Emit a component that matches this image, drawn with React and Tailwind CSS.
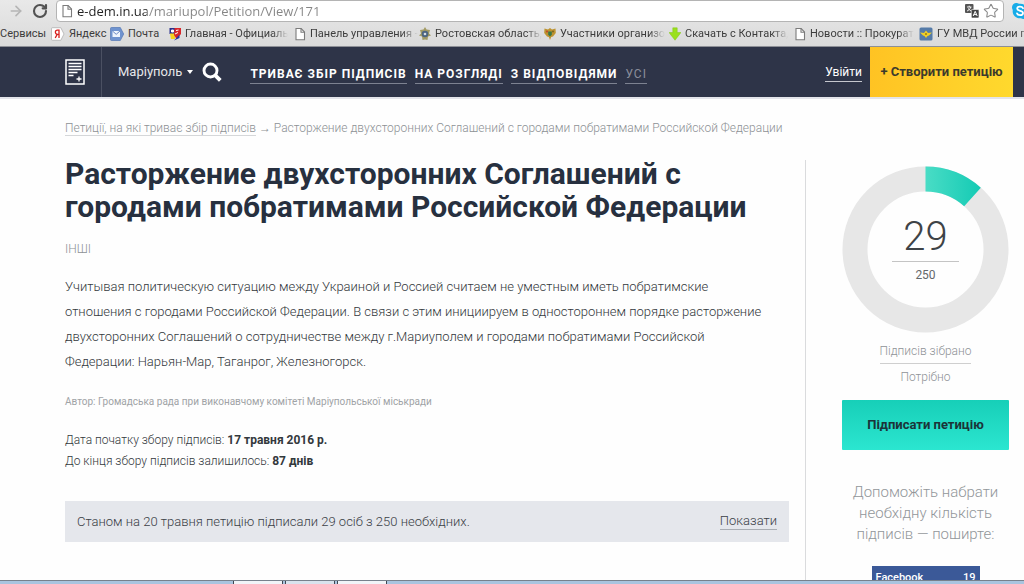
import React from "react";
import { ArrowRight, Star, RotateCw } from "lucide-react";

function PageIcon() {
  return (
    <svg viewBox="0 0 12 14" className="h-3.5 w-3 shrink-0" fill="#fff" stroke="#7b7b7b" strokeWidth="1.1">
      <path d="M2 1.5h5.2L10.5 5v7.8H2z" />
      <path d="M7 1.5V5.2h3.5" fill="none" />
    </svg>
  );
}

function YandexIcon() {
  return (
    <svg viewBox="0 0 14 14" className="h-3.5 w-3.5 shrink-0">
      <path d="M1.5 .7h8.300L13 7l-3.200 6.300H1.500a1 1 0 0 1-1-1V1.700a1 1 0 0 1 1-1z" fill="#fff" stroke="#b0b0b0" strokeWidth=".8" />
      <path d="M8 11V3.200H6.400a2 2.100 0 0 0 0 4.200H8M6.200 7.400 4.200 11" fill="none" stroke="#d8201f" strokeWidth="1.300" />
    </svg>
  );
}

function MailIcon() {
  return (
    <svg viewBox="0 0 14 14" className="h-3.5 w-3.5 shrink-0">
      <path d="M1.500 .5h8.800L13.700 7l-3.400 6.500H1.500a1 1 0 0 1-1-1v-11a1 1 0 0 1 1-1z" fill="#6f93cf" stroke="#5577b4" strokeWidth=".7" />
      <path d="M2.500 4h7.500v6H2.500z" fill="#eef4fd" />
      <path d="m2.500 4 3.700 3.300L10 4" fill="none" stroke="#5a7dbb" strokeWidth=".9" />
    </svg>
  );
}

function ShieldFlagIcon() {
  return (
    <svg viewBox="0 0 12 14" className="h-3.5 w-3 shrink-0">
      <path d="M.5 1H11v6H.5z" fill="#2a2f8c" />
      <path d="M1 6.500h5V12H2z" fill="#f5d21f" />
      <path d="M5.500 1H12v6L7.500 12 5 8z" fill="#d8272a" />
      <path d="M2.500 3h2v2h-2zM7 3.500l2.500-.5M6 7l3-1.500" fill="#fff" stroke="#fff" strokeWidth="1" />
      <path d="M5 13.500 10.500 7.500V11z" fill="#2638a0" />
    </svg>
  );
}

function BadgeIcon() {
  return (
    <svg viewBox="0 0 12 14" className="h-3.5 w-3 shrink-0">
      <path d="M6 0l1.500 2.500L11 3 10 6.500l2 2-3 1-.5 3.500L6 12.500 3.500 13 3 9.500l-3-1 2-2L1 3l3.500-.5z" fill="#a29a62" />
      <circle cx="6" cy="7" r="3.300" fill="#4d6580" />
      <circle cx="6" cy="7" r="1.300" fill="#d5dbe2" />
    </svg>
  );
}

function EagleIcon() {
  return (
    <svg viewBox="0 0 12 14" className="h-3.5 w-3 shrink-0">
      <path d="M6 1 8 2.500 11.500 1.500 11.800 6 9 9.500 7.200 10 6 13 4.800 10 3 9.500.2 6 .5 1.500 4 2.500z" fill="#bd9330" />
      <path d="M4.200 4.500h3.600v3.300L6 9.500 4.200 7.800z" fill="#377649" />
      <circle cx="3" cy="4.500" r="1" fill="#c3442d" />
      <circle cx="9" cy="4.500" r="1" fill="#7b6520" />
    </svg>
  );
}

function DownloadIcon() {
  return (
    <svg viewBox="0 0 12 14" className="h-3.5 w-3 shrink-0">
      <path d="M3.800 .8h4.400v4.700H12L6 13.200 0 5.500h3.800z" fill="#9be01c" stroke="#83c615" strokeWidth=".5" />
    </svg>
  );
}

function PoliceIcon() {
  return (
    <svg viewBox="0 0 14 14" className="h-3.5 w-3.5 shrink-0">
      <rect x=".5" y=".5" width="13" height="13" rx="1.500" fill="#557ba8" />
      <path d="M1 5.500l4 .5 2-2.500 2 2.500 4-.5-3 3-1.500.5L7 11 5.500 9 4 8.500z" fill="#f0cf25" />
      <circle cx="7" cy="7" r="1" fill="#9a7c12" />
    </svg>
  );
}

const shortBookmarks = [
  { label: "Яндекс", Icon: YandexIcon },
  { label: "Почта", Icon: MailIcon },
];

const longBookmarks = [
  { label: "Главная - Официаль", Icon: ShieldFlagIcon },
  { label: "Панель управления -", Icon: PageIcon },
  { label: "Ростовская область,", Icon: BadgeIcon },
  { label: "Участники организо", Icon: EagleIcon },
  { label: "Скачать с Контакта,", Icon: DownloadIcon },
  { label: "Новости :: Прокурат", Icon: PageIcon },
  { label: "ГУ МВД России по", Icon: PoliceIcon },
];

function BrowserBar() {
  return (
    <div className="shrink-0 border-b border-[#8d8f96] bg-gradient-to-b from-[#e9e9e9] to-[#dadada]">
      <div className="flex h-[22px] items-center">
        <button aria-label="Вперед" className="ml-2 text-[#b5b5b5]">
          <ArrowRight className="size-4" strokeWidth={2.5} />
        </button>
        <button aria-label="Обновить" className="ml-2 text-[#525252]">
          <RotateCw className="size-4" strokeWidth={3.2} />
        </button>
        <div className="ml-2 flex h-[22px] flex-1 items-center rounded-sm border border-[#b4b4b4] bg-white pr-1 pl-1">
          <PageIcon />
          <input
            aria-label="Адрес"
            defaultValue="e-dem.in.ua/mariupol/Petition/View/171"
            className="ml-1 min-w-0 flex-1 bg-[linear-gradient(90deg,#222_70px,#858585_70px)] bg-clip-text font-['Open_Sans',sans-serif] text-[13px] leading-5 text-transparent outline-none"
          />
          <button aria-label="Перевести">
            <svg viewBox="0 0 14 14" className="size-3.5">
              <rect width="8.500" height="9" rx="1" fill="#555" />
              <path d="M2 3h4.500M4.200 1.700V3M5.800 3C5.300 5 3.500 6.500 2 7M3 4.500 6 7" stroke="#fff" strokeWidth=".9" fill="none" />
              <rect x="6.300" y="5.500" width="7.700" height="8.500" rx="1" fill="#444" stroke="#fff" strokeWidth=".6" />
              <path d="m8.200 12 2-4.700 2 4.700M8.800 10.600h2.800" stroke="#fff" strokeWidth="1" fill="none" />
            </svg>
          </button>
          <button aria-label="Добавить закладку" className="ml-1 text-[#8a8a8a]">
            <Star className="size-4" strokeWidth={1.6} />
          </button>
        </div>
        <button aria-label="Skype" className="ml-2 w-3 overflow-hidden">
          <svg viewBox="0 0 16 16" className="size-4">
            <path d="M4 0a5 5 0 0 1 3 .8A7 7 0 0 1 15.200 9 4.500 4.500 0 0 1 9 15.200 7 7 0 0 1 .8 7 4.500 4.500 0 0 1 4 0z" fill="#17ace8" />
            <path d="M11 5.200C10 3 5.200 3 5.200 5.600c0 3 5.800 1.600 5.800 4.400 0 3-5.300 2.700-6 .3" fill="none" stroke="#fff" strokeWidth="1.800" strokeLinecap="round" />
          </svg>
        </button>
      </div>
      <nav aria-label="Закладки" className="flex h-6 items-center overflow-hidden text-[11px] leading-4 whitespace-nowrap text-[#3c3c3c]">
        <a href="#apps" className="w-[51px] shrink-0">Сервисы</a>
        {shortBookmarks.map(({ label, Icon }) => (
          <a key={label} href="#bookmark" className="flex w-[59px] shrink-0 items-center gap-1">
            <Icon />
            {label}
          </a>
        ))}
        {longBookmarks.map(({ label, Icon }) => (
          <a key={label} href="#bookmark" className="flex w-[125px] shrink-0 items-center gap-1">
            <Icon />
            <span className="mask-r-from-85% mask-r-to-100%">{label}</span>
          </a>
        ))}
      </nav>
    </div>
  );
}

const tabs = ["Триває збір підписів", "На розгляді", "З відповідями"];

function SiteHeader() {
  return (
    <header className="flex h-[52px] shrink-0 items-stretch border-b-2 border-[#e3e4ea] bg-[#2e3448] pr-[11px] text-white">
      <a href="#home" aria-label="Петиції" className="flex w-[102px] shrink-0 items-center justify-end border-r border-[#4b5062] pr-4">
        <svg viewBox="0 0 20 26" className="h-[26px] w-5" fill="none" stroke="#fff">
          <rect x="1" y="1" width="18" height="24" strokeWidth="1.500" />
          <path d="M3.500 4.500h13M3.500 7.500h13M3.500 10.500h13M3.500 13.500h9M3.500 16.500h5" strokeWidth="1.400" />
          <path d="M14 17.500v5M11.500 20h5" strokeWidth="1.300" />
        </svg>
      </a>
      <button className="ml-4 flex items-center gap-1 text-[13px] text-[#e6e7ea]">
        Маріуполь
        <svg viewBox="0 0 8 4" className="h-1 w-2" fill="#fff"><path d="M1 0h6L4 4z" /></svg>
      </button>
      <button aria-label="Пошук" className="ml-2">
        <svg viewBox="0 0 20 20" className="size-5" fill="none" stroke="#fff">
          <circle cx="8.500" cy="8.500" r="6.500" strokeWidth="2.900" />
          <path d="m13.300 13.300 5 5" strokeWidth="3.800" />
        </svg>
      </button>
      <nav aria-label="Розділи" className="ml-7 flex items-center gap-2 pt-1 text-xs leading-[18px] tracking-[1px] whitespace-nowrap uppercase">
        {tabs.map((tab) => (
          <a key={tab} href="#tab" className="border-b border-[#7d8291] font-bold">{tab}</a>
        ))}
        <a href="#all" className="border-b border-[#7d8291] text-[#8a8e9b]">Усі</a>
      </nav>
      <div className="ml-auto flex items-center">
        <a href="#login" className="mr-2 border-b border-[#c5c7ce] text-xs leading-[18px]">Увійти</a>
        <a href="#create" className="flex h-full w-[143px] items-center justify-center bg-gradient-to-r from-[#ffc323] to-[#ffd92d] text-[13px] font-bold whitespace-nowrap text-[#3b3a2c]">
          + Створити петицію
        </a>
      </div>
    </header>
  );
}

function SignatureRing({ signed, needed }) {
  const radius = 70.5;
  const length = 2 * Math.PI * radius;
  return (
    <div className="grid w-full place-items-center">
      <svg viewBox="0 0 167 167" className="col-start-1 row-start-1 w-full" fill="none" strokeWidth="25">
        <defs>
          <linearGradient id="ring" gradientUnits="userSpaceOnUse" x1="0" y1="85" x2="0" y2="140">
            <stop offset="0" stopColor="#48dcc5" />
            <stop offset="1" stopColor="#13cab4" />
          </linearGradient>
        </defs>
        <circle cx="83.500" cy="83.500" r={radius} stroke="#e7e7e7" />
        <circle
          cx="83.500"
          cy="83.500"
          r={radius}
          stroke="url(#ring)"
          strokeDasharray={`${(length * signed) / needed} ${length}`}
          transform="rotate(-90 83.500 83.500)"
        />
      </svg>
      <div className="col-start-1 row-start-1 w-[67px] text-center text-[#3e4347]">
        <div className="border-b border-[#c4c4c4] pb-0.5 text-[40px] leading-[44px] font-light">{signed}</div>
        <div className="pt-1 text-xs leading-[18px] text-[#63676a]">{needed}</div>
      </div>
    </div>
  );
}

function Sidebar() {
  return (
    <aside className="mt-[22px] w-[204px] shrink-0 border-l border-[#dadbdd] pt-1.5 pl-9 text-center">
      <SignatureRing signed={29} needed={250} />
      <div className="mt-2 flex flex-col items-center text-xs font-light text-[#8f9397]">
        <span className="border-b border-[#cfcfcf] pb-0.5 leading-5">Підписів зібрано</span>
        <span className="pt-1 leading-[18px]">Потрібно</span>
      </div>
      <button className="mt-3.5 h-[50px] w-full rounded-[1px] bg-gradient-to-b from-[#16cfb8] to-[#2be6d0] text-[13px] font-bold text-[#1b3438]">
        Підписати петицію
      </button>
      <p className="mt-8 text-[15px] leading-[21px] font-light text-[#92969a]">
        Допоможіть набрати необхідну кількість підписів — поширте:
      </p>
      <a href="#facebook" className="mx-auto mt-[21px] flex h-6 w-[108px] items-center justify-between bg-[#3b5998] px-1 text-[11px] font-medium text-white">
        <span>Facebook</span>
        <span>19</span>
      </a>
    </aside>
  );
}

function Petition() {
  return (
    <article className="mt-[19px] min-w-0 flex-1">
      <h1 className="text-[30px] leading-[33px] font-bold text-[#27303f]">
        Расторжение двухсторонних Соглашений с городами побратимами Российской Федерации
      </h1>
      <p className="mt-4 text-xs leading-5 font-light text-[#8d9195]">ІНШІ</p>
      <p className="mt-[15px] pr-5 text-[13px] leading-[25px] font-light text-[#33383c]">
        Учитывая политическую ситуацию между Украиной и Россией считаем не уместным иметь побратимские отношения с городами Российской Федерации. В связи с этим инициируем в одностороннем порядке расторжение двухсторонних Соглашений о сотрудничестве между г.Мариуполем и городами побратимами Российской Федерации: Нарьян-Мар, Таганрог, Железногорск.
      </p>
      <p className="mt-[18px] text-[10px] leading-5 text-[#a0a3a6]">
        Автор: Громадська рада при виконавчому комітеті Маріупольської міськради
      </p>
      <div className="mt-[18px] text-xs leading-[21px] font-light text-[#33383c]">
        <p>Дата початку збору підписів: <b className="font-bold">17 травня 2016 р.</b></p>
        <p>До кінця збору підписів залишилось: <b className="font-bold">87 днів</b></p>
      </div>
      <div className="mt-[29px] flex h-[41px] items-center justify-between bg-[#e5e7ec] px-3 text-[13px] font-light text-[#3a4046]">
        <span>Станом на 20 травня петицію підписали 29 осіб з 250 необхідних.</span>
        <a href="#signatures" className="border-b border-[#a9adb3] leading-4">Показати</a>
      </div>
    </article>
  );
}

export default function App() {
  return (
    <div className="flex h-screen flex-col overflow-hidden bg-[#fefefe] font-['Roboto',sans-serif]">
      <BrowserBar />
      <SiteHeader />
      <main className="min-h-0 flex-1 overflow-hidden pt-[19px] pr-[15px] pl-[65px]">
        <nav aria-label="Шлях" className="text-xs leading-5 font-light whitespace-nowrap text-[#8d9195]">
          <a href="#petitions" className="border-b border-[#d5d7d9]">Петиції, на які триває збір підписів</a>
          {" → "}
          <span>Расторжение двухсторонних Соглашений с городами побратимами Российской Федерации</span>
        </nav>
        <div className="flex gap-4">
          <Petition />
          <Sidebar />
        </div>
      </main>
      <footer className="flex h-1 shrink-0 gap-0.5 border-t border-[#78818c] bg-[#a9c4df] pl-[233px]">
        <div className="w-[50px] border-x border-[#3f4852] bg-[#f1f4f8]" />
        <div className="w-[50px] border-x border-[#3f4852] bg-[#d9e3ed]" />
        <div className="w-[50px] border-x border-[#3f4852] bg-[#f1f4f8]" />
      </footer>
    </div>
  );
}
